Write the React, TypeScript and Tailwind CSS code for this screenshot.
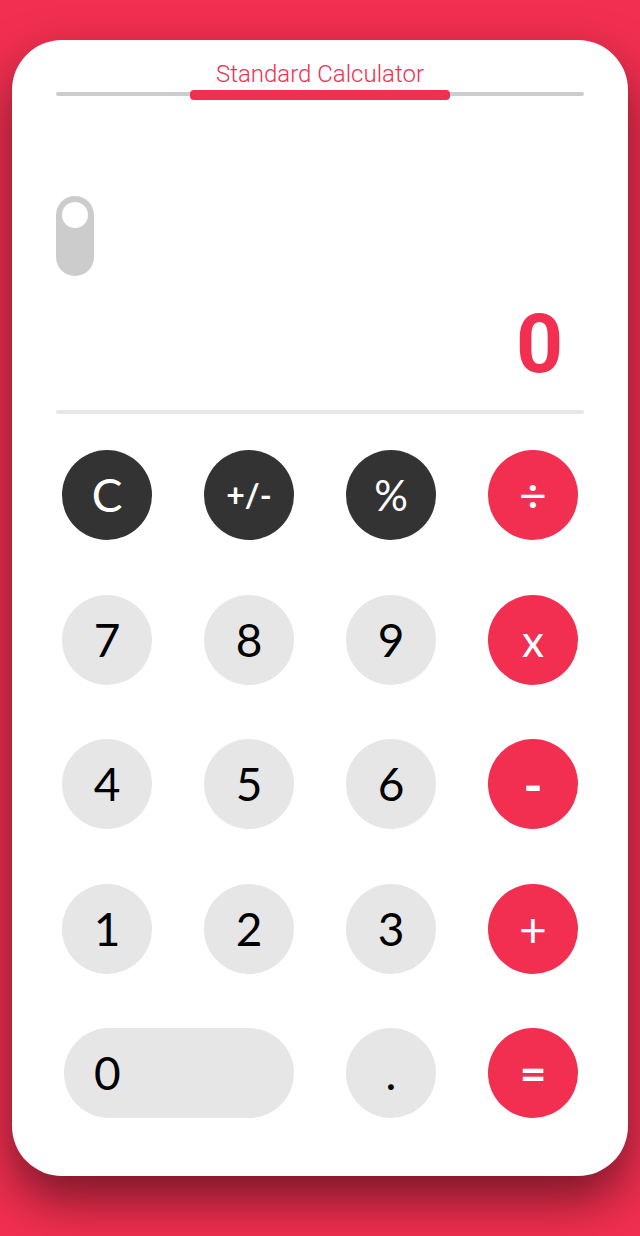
import React, { useState } from 'react';

type Kind = 'fn' | 'num' | 'op';

interface Key {
  label: string;
  kind: Kind;
  wide?: boolean;
  cls?: string;
}

const KEYS: Key[] = [
  { label: 'C', kind: 'fn', cls: 'text-[46px]' },
  { label: '+/-', kind: 'fn', cls: 'text-[32px] font-bold' },
  { label: '%', kind: 'fn', cls: 'text-[42px]' },
  { label: '÷', kind: 'op', cls: 'text-[48px]' },
  { label: '7', kind: 'num' },
  { label: '8', kind: 'num' },
  { label: '9', kind: 'num' },
  { label: 'x', kind: 'op', cls: 'text-[44px]' },
  { label: '4', kind: 'num' },
  { label: '5', kind: 'num' },
  { label: '6', kind: 'num' },
  { label: '-', kind: 'op', cls: 'text-[52px] font-bold' },
  { label: '1', kind: 'num' },
  { label: '2', kind: 'num' },
  { label: '3', kind: 'num' },
  { label: '+', kind: 'op', cls: 'text-[48px]' },
  { label: '0', kind: 'num', wide: true },
  { label: '.', kind: 'num' },
  { label: '=', kind: 'op', cls: 'text-[46px] font-bold' },
];

const kindClass: Record<Kind, string> = {
  fn: 'bg-[#333333] text-white',
  num: 'bg-[#e6e6e6] text-black',
  op: 'bg-[#f22f50] text-white',
};

export default function App() {
  const [display, setDisplay] = useState('0');
  const [dark, setDark] = useState(false);

  const press = (k: string) => {
    if (k === 'C') return setDisplay('0');
    if (/[0-9]/.test(k)) setDisplay(d => (d === '0' ? k : d + k));
  };

  return (
    <div className="min-h-[1236px] bg-[#f22f50] pt-10 pb-[60px] px-3" style={{ fontFamily: 'Lato, sans-serif' }}>
      <div className="bg-white rounded-[50px] shadow-[0_24px_50px_rgba(0,0,0,0.5)] pt-[22px] pb-[58px]">
        {/* header tab */}
        <div className="px-[44px]">
          <div className="text-center text-[#f22f50] text-[24px] leading-[24px] font-light" style={{ fontFamily: 'Roboto, sans-serif' }}>
            Standard Calculator
          </div>
          <div className="relative h-[10px] mt-1">
            <div className="absolute left-0 right-0 top-[2px] h-1 rounded-full bg-[#cccccc]" />
            <div className="absolute left-[134px] top-0 w-[260px] h-[10px] rounded-[4px] bg-[#f22f50]" />
          </div>
        </div>

        {/* display */}
        <div className="px-[44px]">
          <div
            onClick={() => setDark(v => !v)}
            className={`mt-[96px] w-[38px] h-[80px] rounded-full bg-[#cccccc] p-[6px] flex flex-col cursor-pointer ${
              dark ? 'justify-end' : 'justify-start'
            }`}
          >
            <div className="w-[26px] h-[26px] rounded-full bg-white" />
          </div>
          <div
            className="mt-[27px] text-right text-[82px] leading-none font-bold text-[#f22f50] pr-[21px]"
            style={{ fontFamily: 'Roboto, sans-serif' }}
          >
            {display}
          </div>
          <div className="mt-[25px] h-1 rounded-full bg-[#e6e6e6]" />
        </div>

        {/* keypad */}
        <div className="mt-9 px-[50px] grid grid-cols-4 gap-x-[52px] gap-y-[54.5px]">
          {KEYS.map(k => (
            <button
              key={k.label}
              onClick={() => press(k.label)}
              className={`h-[90px] rounded-full flex items-center leading-none ${kindClass[k.kind]} ${
                k.wide ? 'col-span-2 w-[230px] justify-self-end justify-start pl-[30px]' : 'w-[90px] justify-center'
              } ${k.cls ?? 'text-[46px]'}`}
            >
              {k.label}
            </button>
          ))}
        </div>
      </div>
    </div>
  );
}
